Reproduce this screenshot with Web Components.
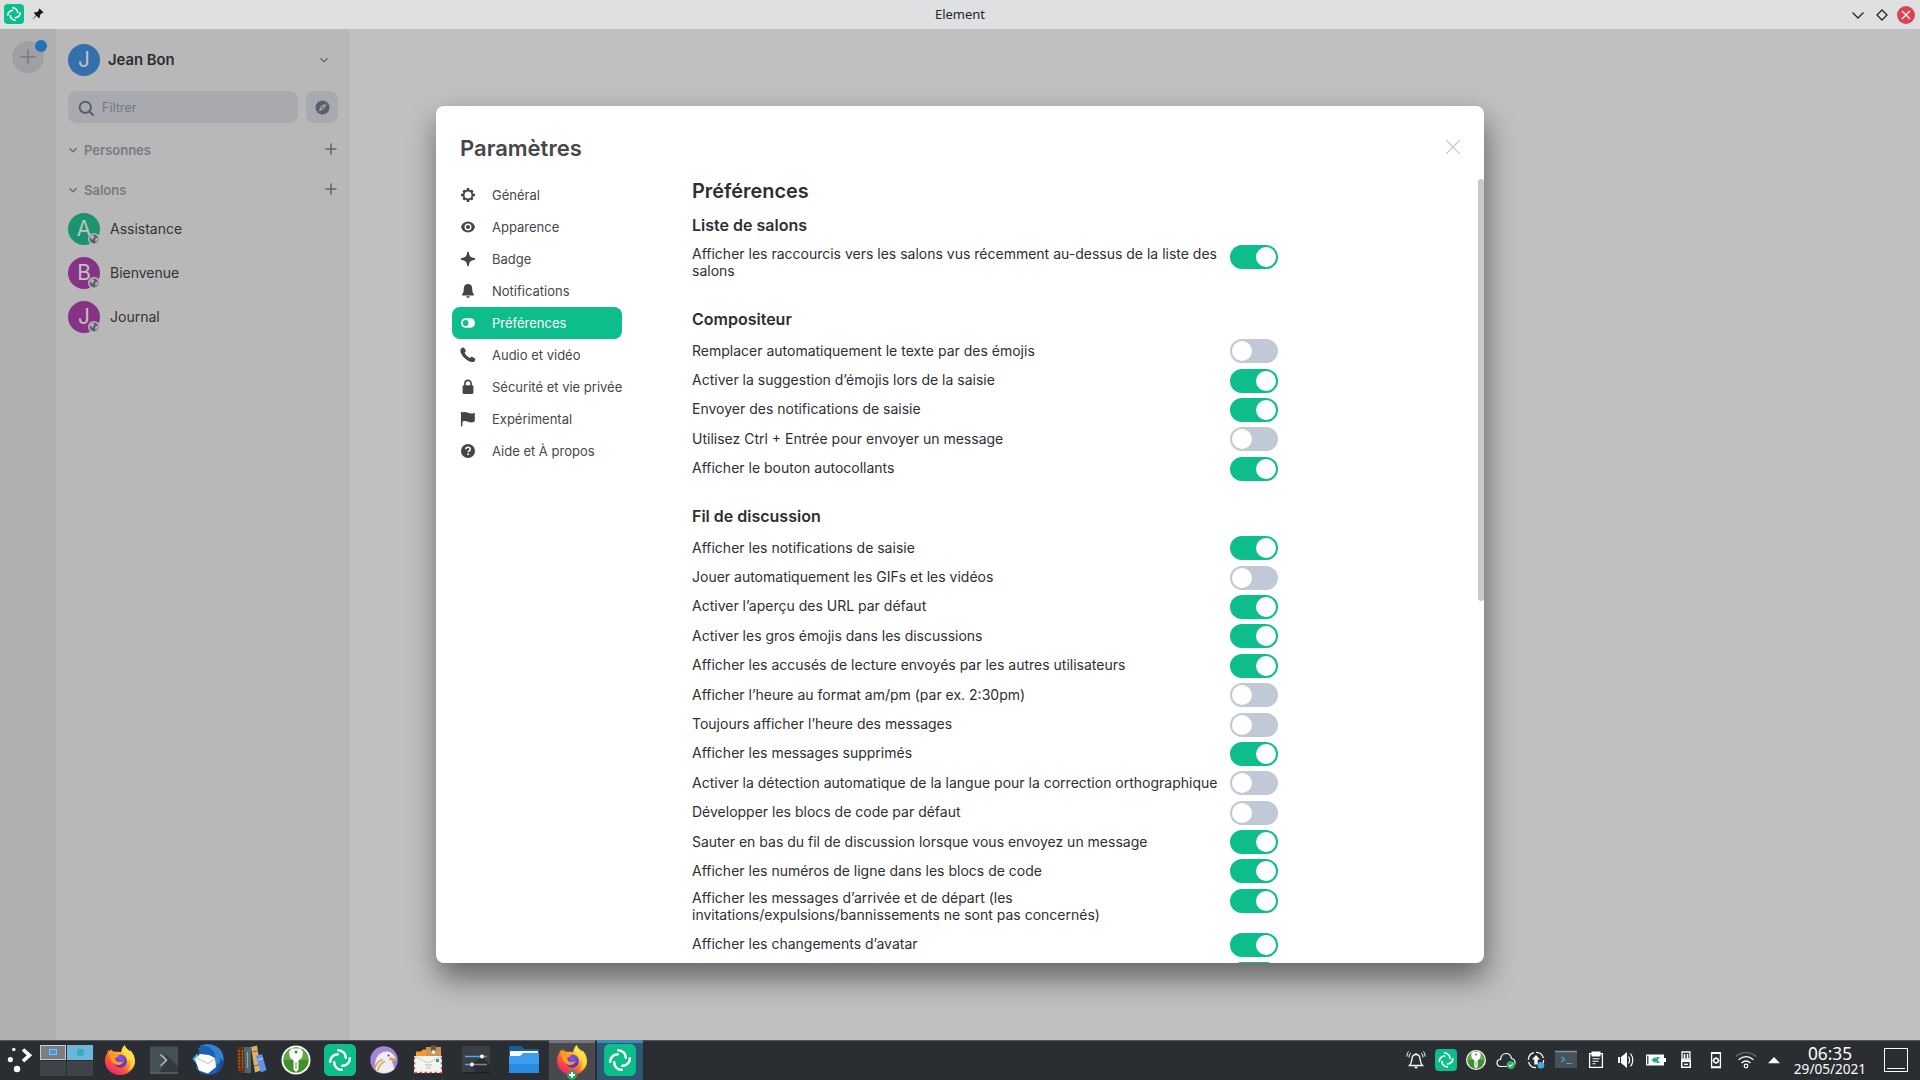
<!DOCTYPE html>
<html lang="fr">
<head>
<meta charset="utf-8">
<title>Element</title>
<style>
html,body{margin:0;width:1920px;height:1080px;overflow:hidden;background:#c0c0c0}
body{font-family:Inter,"Liberation Sans",sans-serif;color:#2e2f32}
</style>
</head>
<body>
<desktop-screen></desktop-screen>
<script>
const ARC='M22.68 3.24A18.36 18.36 0 0 1 41.04 21.6';
const logo=(r)=>`<svg viewBox="0 0 32 32"><rect width="32" height="32" rx="${r}" fill="#0dbd8b"/><g transform="translate(4.8 4.8) scale(.415)" fill="none" stroke="#fff" stroke-width="6" stroke-linecap="round"><path d="${ARC}"/><path d="${ARC}" transform="rotate(90 27 27)"/><path d="${ARC}" transform="rotate(180 27 27)"/><path d="${ARC}" transform="rotate(270 27 27)"/></g></svg>`;
const keepass=`<svg viewBox="0 0 32 32"><circle cx="16" cy="16" r="14.5" fill="#fff"/><circle cx="16" cy="16" r="12.6" fill="#3f8f2c"/><path d="M3.6 16a12.4 12.4 0 0 1 24.8 0z" fill="#64a84a"/><path d="M11.500 4.500h9l2.500 3.500-1 5.500-3.500 3v9L16 28l-2.500-2.500v-9l-3.500-3-1-5.500z" fill="#fff"/><circle cx="16" cy="8" r="1.500" fill="#3f8f2c"/><path d="M16 18v7" stroke="#4c9838" stroke-width="1"/></svg>`;
const ICONS={
logo:logo(6),
logoBig:logo(5.5),
keepass,
pin:`<svg viewBox="0 0 12 12"><path d="M7.500 .4 11.600 4.500 10.600 5.200 9.900 5 7.900 7.200 7.900 9.300 7 10.200 4.500 7.700.8 11.200.6 11 3.900 7.200 1.800 5.100 2.700 4.200 4.900 4.200 7 2.200 6.800 1.300z" fill="#17191b"/></svg>`,
gear:`<svg viewBox="0 0 16 16"><g stroke="#454545" stroke-width="2.600"><path d="M8 1v14M1 8h14M3.300 3.300l9.400 9.400M12.700 3.300l-9.400 9.400"/></g><circle cx="8" cy="8" r="5.400" fill="#454545"/><circle cx="8" cy="8" r="3.500" fill="#fff"/></svg>`,
eye:`<svg viewBox="0 0 16 16"><path d="M8 2.600C4.600 2.600 2 4.800.9 8 2 11.200 4.600 13.400 8 13.400s6-2.200 7.100-5.400C14 4.800 11.400 2.600 8 2.600z" fill="#454545"/><circle cx="8" cy="8" r="3.500" fill="#fff"/><circle cx="8" cy="8" r="2.100" fill="#454545"/></svg>`,
star:`<svg viewBox="0 0 16 16"><path d="M8 .8c.5 0 .8.300.9.900.5 3.300 1.300 4.600 5.300 5.300.6.100 1 .5 1 1s-.4.900-1 1c-4 .7-4.800 2-5.300 5.300-.1.600-.4.900-.9.900s-.8-.3-.9-.9C6.600 11 5.800 9.700 1.800 9c-.6-.1-1-.5-1-1s.4-.9 1-1c4-.7 4.800-2 5.300-5.300.1-.6.4-.9.900-.9z" fill="#454545"/></svg>`,
bell:`<svg viewBox="0 0 16 16"><path d="M8 1C5.200 1 3.800 3 3.800 5.500c0 3-.5 4.500-1.600 5.800-.5.600-.2 1.200.5 1.200h10.600c.7 0 1-.6.5-1.200-1.100-1.300-1.600-2.800-1.600-5.800C12.200 3 10.800 1 8 1zM6.200 13.300h3.600c-.2 1-.9 1.500-1.800 1.500s-1.600-.5-1.800-1.500z" fill="#454545"/></svg>`,
toggle:`<svg viewBox="0 0 16 16"><rect x="1" y="3.200" width="14" height="9.600" rx="4.800" fill="#fff"/><circle cx="5.600" cy="8" r="2.900" fill="#0dbd8b"/></svg>`,
phone:`<svg viewBox="0 0 16 16"><path d="M1.100 1.500C1.700.6 3 .1 3.900.7l1.700 2.400c.4.600.3 1.200-.2 1.700l-.8.9c.8 1.900 3.200 4.300 5.300 5.300l.9-.8c.5-.5 1.200-.5 1.700-.2l2.500 1.600c.7.900.2 2.300-.7 2.900C12.600 15.700 10.100 15.100 7 13 3.200 10.300.9 7 .4 4.200.3 3.200.6 2.200 1.100 1.500z" fill="#454545"/></svg>`,
lock:`<svg viewBox="0 0 16 16"><path d="M4.900 7V4.500a3.100 3.100 0 0 1 6.200 0V7" fill="none" stroke="#454545" stroke-width="1.600"/><rect x="2.600" y="6.300" width="10.800" height="8.600" rx="1.300" fill="#454545"/></svg>`,
flag:`<svg viewBox="0 0 16 16"><path d="M1.700 1.500v13.200" stroke="#454545" stroke-width="1.500" stroke-linecap="round"/><path d="M1.300 2C3.500.3 6 .9 8 1.800c2 .8 4 .8 6 .1.500-.2.800 0 .8.500v7.400c0 .4-.2.700-.5.900-2.300 1-4.300.8-6.300 0s-4-1-6 0z" fill="#454545"/></svg>`,
help:`<svg viewBox="0 0 16 16"><circle cx="8" cy="8" r="7" fill="#454545"/><path d="M5.900 6.300c0-1.200.9-2 2.100-2s2.200.7 2.200 1.900c0 1.600-2 1.600-2 3.100" fill="none" stroke="#fff" stroke-width="1.500"/><circle cx="8.100" cy="11.300" r="1" fill="#fff"/></svg>`,
close:`<svg viewBox="0 0 16 16"><path d="M1.200 1.200l13.600 13.600M14.800 1.200 1.200 14.800" stroke="#c1c1c1" stroke-width="1.100"/></svg>`,
chev:`<svg viewBox="0 0 10 10"><path d="M1.500 3.200 5 6.700 8.500 3.200" fill="none" stroke="#6b7078" stroke-width="1.600"/></svg>`,
plus:`<svg viewBox="0 0 12 12"><path d="M6 1v10M1 6h10" stroke="#5c6374" stroke-width="1.500" stroke-linecap="round"/></svg>`,
plusBig:`<svg viewBox="0 0 16 16"><path d="M8 .5v15M.5 8h15" stroke="#75787e" stroke-width="1.500"/></svg>`,
search:`<svg viewBox="0 0 16 16"><circle cx="7.300" cy="7.300" r="5.600" fill="none" stroke="#565d6b" stroke-width="1.900"/><path d="M11.400 11.400l3.600 3.600" stroke="#565d6b" stroke-width="2" stroke-linecap="round"/></svg>`,
compass:`<svg viewBox="0 0 16 16"><circle cx="8" cy="8" r="7.500" fill="#596070"/><path d="M12.100 3.900 9.600 9.600 3.900 12.100 6.400 6.400z" fill="#a9abb0"/><circle cx="8" cy="8" r="1.200" fill="#596070"/></svg>`,
globe:`<svg viewBox="0 0 12 12"><circle cx="6" cy="6" r="6" fill="#b8b8b8"/><circle cx="6" cy="6" r="4.400" fill="#5b616c"/><path d="M2.300 4.200c1-1.600 2-2 3.400-1.800L6.300 4 4.800 5.300 5 7 3.800 6.200zM7.300 5.400l1.700-.6 1 1.200-1 2.200L7 8.800l.4-1.500z" fill="#b8b8b8"/></svg>`,
min:`<svg viewBox="0 0 20 20"><path d="M4.500 7.500 10 13l5.500-5.500" fill="none" stroke="#232629" stroke-width="1.300"/></svg>`,
max:`<svg viewBox="0 0 20 20"><path d="M10 5l5 5-5 5-5-5z" fill="none" stroke="#232629" stroke-width="1.300"/></svg>`,
shut:`<svg viewBox="0 0 20 20"><circle cx="10" cy="10" r="9" fill="#da4453"/><path d="M6 6l8 8M14 6l-8 8" stroke="#fff" stroke-width="1.200"/></svg>`,
kde:`<svg viewBox="0 0 32 32"><circle cx="9.800" cy="5.500" r="1.700" fill="#fff"/><circle cx="6.400" cy="15.600" r="2.600" fill="#fff"/><circle cx="13" cy="25" r="3.200" fill="#fff"/><path d="M19 5.500l6.500 5.800-6.500 5.800" fill="none" stroke="#fff" stroke-width="3.600"/></svg>`,
firefox:`<svg viewBox="0 0 32 32"><defs><linearGradient id="f" x1=".8" y1=".1" x2=".2" y2=".95"><stop offset="0" stop-color="#fff44f"/><stop offset=".35" stop-color="#ffb01f"/><stop offset=".65" stop-color="#ff5a36"/><stop offset="1" stop-color="#ee1d79"/></linearGradient><radialGradient id="p" cx=".5" cy=".3" r=".8"><stop offset="0" stop-color="#8a55f0"/><stop offset="1" stop-color="#46309b"/></radialGradient></defs><path d="M20.600 1c.7 2.200 2.200 3.500 4 5 .6.500 1.100 1 1.600 1.600 0-.6-.1-1-.2-1.500 3 2.600 5 6.800 5 11.200C31 25.300 24.300 31 16 31 7.700 31 1 25 1 17c0-3.200.8-6 2.700-8.600l.3-2.600 1.700 1.500 1.200-2 1.600 2c1 0 2.300.2 3.500.8 2.200-.5 4-.3 5 .2C17.500 5.200 18.800 3 20.600 1z" fill="url(#f)"/><circle cx="16.300" cy="17.200" r="6.600" fill="url(#p)"/><path d="M5 8.500c2.200-.8 4.600-.3 6.400 1.200 1.300-.6 3.800-.7 4.800.2l-1.600 1.400c0 1.600-1.200 2-3.200 2.200-.6 3 1.700 4.500 4.300 4.600 2 .1 3-.8 4.200-.8-1.300 2.300-3.600 3.800-6 3.700-4.500-.1-8.500-4.800-8.900-12.500z" fill="#ff9a26"/><path d="M20.500 1.500c-2 2.500-2 5.500-.3 8 2 2.700 3.600 5 3.200 8.500 1.200-1.100 1.600-2.800 1.500-4.300C27.500 18 27 24 22 27.500c5-1.500 8.500-5 8.500-10.500 0-4-1.500-7.500-4.500-10l.2 1.500C24 6 21.500 4.500 20.500 1.500z" fill="#ffe14a" opacity=".75"/></svg>`,
term:`<svg viewBox="0 0 32 32"><rect x="2" y="2.500" width="28" height="27" rx="1" fill="#475155"/><path d="M16 9l14 13v7.500H10L20 16z" fill="#343b3e"/><path d="M12.500 10.500l6 5.700-6 5.700" fill="none" stroke="#c9ced0" stroke-width="1.200"/><path d="M2 29h28" stroke="#6a7478" stroke-width="1"/></svg>`,
bird:`<svg viewBox="0 0 32 32"><path d="M8 2c8-3 17-.5 21 5 4 7 3.500 14-1 19-4.500 5-12 6-18 3.500l-6-5z" fill="#1f5fb5"/><path d="M8 2c6-1 11 1 14 6 2.500 4 2 10 0 14l9-5C33 9 27 2 20 .8 15-.2 11 .5 8 2z" fill="#3084d2"/><path d="M6 4.500l3-2.500 6 5-6 4z" fill="#1f5fb5"/><path d="M.5 15l5-6 1 13z" fill="#41b3ee"/><path d="M3 15l5-5 9 1 6 3 1 9-8 6.500-9-3z" fill="#fff"/><path d="M5 14l11 5.500 7-5" fill="none" stroke="#b4bac2" stroke-width="1"/><path d="M23 27c4-4 6-8 5-14l3 5c-.5 5-3 8-8 9z" fill="#174a94"/></svg>`,
books:`<svg viewBox="0 0 32 32"><path d="M1 3l7-1 1 27H2z" fill="#5d3117"/><path d="M8 3h7v26H9z" fill="#50686c"/><path d="M15 3l6-1.500 4 25-6 2z" fill="#d9b06c"/><path d="M20 12l6-2 4.500 16-5.500 2.500z" fill="#5e93ef"/><path d="M3 6v20M6.500 6v20" stroke="#b0752b" stroke-width="1.200" stroke-dasharray="2 1.200"/><path d="M11.500 8v16" stroke="#8ba2a5" stroke-width="1.200"/><path d="M16.500 8l5-1.300M18 22l5-1.300" stroke="#8e602b" stroke-width="1.100"/><path d="M22 16l5-1.700" stroke="#dce7ff" stroke-width="1"/></svg>`,
pale:`<svg viewBox="0 0 32 32"><circle cx="16" cy="16" r="13.700" fill="#a386dc"/><path d="M8 27c-2-7-1-16 7-19 5-1.800 10 .5 11.500 4.500l2 2.500c-3 .5-5 1.500-4 4l2 6c-5 4.500-12 5.500-18.500 2z" fill="#f0edf2"/><path d="M22 13l7 2c-1 1.500-2 2-3.500 2-1.500-.8-3-1-4.500-.5z" fill="#d9a54c"/><path d="M15 15.500c-4 1-7 4-8.500 9.500M17 17.500c-4 1.500-6.500 5-7.500 9.500" fill="none" stroke="#d9a54c" stroke-width="1.600"/><circle cx="20.500" cy="11.500" r="1" fill="#47364d"/></svg>`,
mail:`<svg viewBox="0 0 32 32"><path d="M4 7.500h5l2-2h4V28H4z" fill="#f39c2c"/><rect x="14" y="3" width="15" height="20" fill="#c99455"/><rect x="19" y="1.500" width="5" height="6" fill="#6d553e"/><circle cx="21.500" cy="8" r="2" fill="#f4e3c7"/><path d="M2 12h28v17H2z" fill="#f4f4f2"/><path d="M2 12l14 7 14-7" fill="none" stroke="#ccc" stroke-width="1"/><path d="M2.500 28.500h27M29.500 13v15M2.500 13v15" stroke="#db5050" stroke-width="1.300" stroke-dasharray="2.500 2.500"/><rect x="24" y="15" width="3" height="3" fill="#20a4a0"/><path d="M13 21h7M14 24h5" stroke="#b5b5b5" stroke-width="1"/></svg>`,
sliders:`<svg viewBox="0 0 32 32"><rect x="2" y="2" width="28" height="27" rx="1" fill="#3b3f43"/><path d="M22 13l8 8v8H16l-5-8z" fill="#282c30"/><path d="M5 12.500h17M5 20.500h7" stroke="#3daee9" stroke-width="1.500"/><path d="M23 12.500h4M13 20.500h14" stroke="#7b858c" stroke-width="1.500"/><circle cx="22" cy="12.500" r="2" fill="#fff"/><circle cx="12" cy="20.500" r="2" fill="#fff"/><path d="M2 28.800h28" stroke="#17191b"/></svg>`,
folder:`<svg viewBox="0 0 32 32"><path d="M1 2h12l3 3h15v20H1z" fill="#17609f"/><path d="M2 7h28v6H2z" fill="#fbfcfd"/><path d="M1 12h11l3-3h16v20H1z" fill="#3a9df0"/><path d="M1 20h30v9H1z" fill="#2585df" opacity=".75"/></svg>`,
tbell:`<svg viewBox="0 0 22 22"><path d="M4.500 16.500h13c-2-2-2.200-4-2.500-7-.3-2.600-1.700-4-4-4s-3.700 1.400-4 4c-.3 3-.5 5-2.500 7zM9.500 18.500h3M11 4v1.500" fill="none" stroke="#fcfcfc" stroke-width="1.300"/><path d="M6 4C4.500 5 4 6.500 4 8.500M3.700 2.500C2.300 4 2 5.500 2 7.500M16 4c1.500 1 2 2.500 2 4.500M18.300 2.500C19.700 4 20 5.500 20 7.500" fill="none" stroke="#fcfcfc" stroke-width="1"/></svg>`,
cloud:`<svg viewBox="0 0 22 22"><path d="M6 17.500c-2.500 0-4-1.500-4-3.500s1.500-3.500 3.500-3.500C6 6.500 8 4.500 11 4.500s5 2 5.500 5c2 .3 3.500 1.800 3.500 4s-1.500 4-4 4z" fill="none" stroke="#fcfcfc" stroke-width="1.200"/><circle cx="15.800" cy="16" r="4.200" fill="#2fa866"/><path d="M13.700 16l1.600 1.500 2.700-3" fill="none" stroke="#fff" stroke-width="1.100"/></svg>`,
update:`<svg viewBox="0 0 22 22"><circle cx="11" cy="11" r="7.700" fill="none" stroke="#fcfcfc" stroke-width="1.200" stroke-dasharray="10 2"/><path d="M11 6l4 4.500h-2.300v5H9.300v-5H7z" fill="#fcfcfc"/><circle cx="16" cy="16.300" r="3.300" fill="#3daee9"/></svg>`,
konsole:`<svg viewBox="0 0 22 22"><rect width="22" height="17" y="2" fill="#475259"/><path d="M0 2.500h22" stroke="#8b969c" stroke-width="1.400"/><path d="M6.500 8l3 2.500-3 2.500M11.500 14.500h5" fill="none" stroke="#3daee9" stroke-width="1.200"/></svg>`,
clip:`<svg viewBox="0 0 22 22"><path d="M4.600 4.600h12.800v13.800H4.600z" fill="none" stroke="#fcfcfc" stroke-width="1.300"/><path d="M7 3h8v4H7zM7.500 9.800h7M7.500 12.300h6M7.500 14.800h3" stroke="#fcfcfc" stroke-width="1.100" fill="#fcfcfc"/></svg>`,
vol:`<svg viewBox="0 0 22 22"><path d="M3 8h2v6H3zM6 8l6-5v16l-6-5z" fill="#fcfcfc"/><path d="M13.500 7.500q2.300 3.500 0 7M15.500 4.500q4.600 6.500 0 13" fill="none" stroke="#fcfcfc" stroke-width="1.200"/></svg>`,
batt:`<svg viewBox="0 0 22 22"><path d="M1 5.500h18v11H1zM19 9h2v4h-2z" fill="#fcfcfc"/><path d="M2.200 6.700h1.200v8.600H2.200z" fill="#2a2e32"/><path d="M6.500 11l4-3.200v1.700h1V8h3v1.400H13v3.200h1.500V14h-3v-1.500h-1v1.700z" fill="#1fa58e"/></svg>`,
usb:`<svg viewBox="0 0 22 22"><path d="M7 3h8v7H7z" fill="none" stroke="#fcfcfc" stroke-width="1.300"/><path d="M9.500 5v4M12.500 5v4" stroke="#fcfcfc" stroke-width="1.600"/><path d="M6 10.500h10v8.500H6z" fill="#fcfcfc"/><path d="M7.500 13h7v4.500h-7z" fill="#2a2e32"/><path d="M9 15.300h4" stroke="#fcfcfc" stroke-width="1.300"/></svg>`,
mobile:`<svg viewBox="0 0 22 22"><path d="M6.600 3.600h8.800v14.800H6.600z" fill="none" stroke="#fcfcfc" stroke-width="1.300"/><path d="M6 4h10M6 18.300h10" stroke="#fcfcfc" stroke-width="2"/><circle cx="11" cy="11.500" r="2.300" fill="none" stroke="#fcfcfc" stroke-width="1.500"/><path d="M11 8v7M7.500 11.500h7" stroke="#fcfcfc" stroke-width="1" stroke-dasharray="1.200 4.600"/></svg>`,
wifi:`<svg viewBox="0 0 22 22"><path d="M.8 7.500q10.200-8 20.400 0" fill="none" stroke="#72777b" stroke-width="1.100"/><path d="M3.500 10.800q7.500-6.200 15 0M6.500 14q4.500-4 9 0" fill="none" stroke="#fcfcfc" stroke-width="1.200"/><circle cx="11" cy="17" r="1.800" fill="none" stroke="#fcfcfc" stroke-width="1.200"/></svg>`,
tri:`<svg viewBox="0 0 22 22"><path d="M5 14.200 11 8l6 6.200z" fill="#fcfcfc"/></svg>`
};
const define=(name,css,html)=>{
  customElements.define(name,class extends HTMLElement{
    constructor(){
      super();
      const t=document.createElement('template');
      t.innerHTML=`<style>*{box-sizing:border-box}${css}</style>${typeof html==='function'?html(this):html}`;
      this.attachShadow({mode:'open'}).append(t.content.cloneNode(true));
    }
  });
};
define('ui-icon',':host{display:block;flex:none;width:var(--s,16px);height:var(--s,16px)}svg{display:block;width:100%;height:100%;overflow:visible}',h=>ICONS[h.getAttribute('name')]||'');

define('window-bar',`:host{display:grid;grid-template-columns:1fr auto 1fr;align-items:center;height:29px;background:#dfe0e2;font:13px "Noto Sans",sans-serif;color:#232629}
.l,.r{display:flex;align-items:center}.l{gap:8px;padding-left:4px}.r{justify-content:flex-end;gap:4px;padding-right:4px}.t{padding-bottom:2px}.l{padding-bottom:1px}`,
`<div class="l"><ui-icon name="logo" style="--s:20px"></ui-icon><ui-icon name="pin" style="--s:12px"></ui-icon></div><div class="t"><slot></slot></div><div class="r"><ui-icon name="min" style="--s:20px"></ui-icon><ui-icon name="max" style="--s:20px"></ui-icon><ui-icon name="shut" style="--s:20px"></ui-icon></div>`);

define('community-rail',`:host{display:flex;justify-content:center;align-items:flex-start;width:56px;background:#b0b0b0;padding-top:12px}
.b{position:relative;width:32px;height:32px;border-radius:50%;background:#9ea0a5;display:flex;align-items:center;justify-content:center}
.b i{position:absolute;left:23px;top:-1px;width:12px;height:12px;border-radius:50%;background:#2470b9}`,
`<div class="b"><ui-icon name="plusBig" style="--s:16px"></ui-icon><i></i></div>`);

define('user-avatar',`:host{position:relative;display:flex;flex:none;width:32px;height:32px;border-radius:50%;background:var(--c);color:#c3c3c3;font-size:20.800px;font-weight:400;line-height:31px;justify-content:center}
ui-icon{position:absolute;left:20px;top:20px}`,h=>`<slot></slot>${h.hasAttribute('public')?'<ui-icon name="globe" style="--s:12px"></ui-icon>':''}`);

define('room-tile',`:host{display:flex;align-items:center;height:44px;gap:10px;font-size:14px;line-height:18px;color:#323335}span{padding-bottom:1px}`,
h=>`<user-avatar public style="--c:${h.getAttribute('color')}">${h.getAttribute('letter')}</user-avatar><span><slot></slot></span>`);

define('room-section',`:host{display:block}.h{display:flex;align-items:center;height:40px;font-weight:600;font-size:13px;color:#767b82}.h ui-icon:first-child{margin-right:6px}.h ui-icon:last-child{margin-left:auto;margin-right:1px;margin-top:-2px}`,
h=>`<div class="h"><ui-icon name="chev" style="--s:10px"></ui-icon><span>${h.getAttribute('label')}</span><ui-icon name="plus" style="--s:12px"></ui-icon></div><slot></slot>`);

define('left-panel',`:host{display:block;width:294px;background:#b8b8b8;padding:15px 12px 0}
.u{display:flex;align-items:center;height:32px;gap:8px;font-weight:600;font-size:14.800px;color:#2c2d30}.u span{padding-bottom:1px}
.u ui-icon{margin-left:auto;margin-right:9px}
.s{display:flex;gap:8px;margin-top:15px;margin-bottom:7px}
.f{flex:1;height:32px;border-radius:8px;background:#a8aaaf;display:flex;align-items:center;gap:8px;padding-left:10px;font-size:12.600px;color:#73787f}.f ui-icon{margin-top:1px}
.e{width:32px;height:32px;border-radius:8px;background:#a8aaaf;display:flex;align-items:center;justify-content:center}
.rooms{margin-top:-3px}`,
`<div class="u"><user-avatar style="--c:#3470ab">J</user-avatar><span>Jean Bon</span><ui-icon name="chev" style="--s:10px"></ui-icon></div>
<div class="s"><div class="f"><ui-icon name="search" style="--s:16px"></ui-icon><span>Filtrer</span></div><div class="e"><ui-icon name="compass" style="--s:15px"></ui-icon></div></div>
<room-section label="Personnes"></room-section>
<room-section label="Salons"><div class="rooms"><room-tile color="#1b9270" letter="A">Assistance</room-tile><room-tile color="#873385" letter="B">Bienvenue</room-tile><room-tile color="#873385" letter="J">Journal</room-tile></div></room-section>`);

define('toggle-switch',`:host{display:flex;flex:none;width:48px;height:24px;border-radius:12px;padding:2px;background:#c1c8d6}:host([on]){background:#0dbd8b;justify-content:flex-end}
i{width:20px;height:20px;border-radius:50%;background:#fff}`,'<i></i>');

define('settings-flag',`:host{display:flex;justify-content:space-between;align-items:flex-start;height:29.400px;font-size:14px;line-height:17px;color:#2e2f32}
:host([tall]){height:44px}
.l{display:flex;align-items:center;min-height:21.900px;white-space:nowrap}`,
h=>`<div class="l"><span><slot></slot></span></div><toggle-switch ${h.hasAttribute('on')?'on':''}></toggle-switch>`);

define('settings-group',`:host{display:block;margin-bottom:20.800px}h3{margin:0 0 9.800px;font-size:16px;line-height:19.400px;font-weight:600;color:#2e2f32}`,
h=>`<h3>${h.getAttribute('label')}</h3><slot></slot>`);

define('nav-tab',`:host{display:flex;align-items:center;height:32px;border-radius:8px;padding-left:8px;gap:16px;font-size:13px;color:#45474a;white-space:nowrap}:host([active]){background:#0dbd8b;color:#fff}`,
h=>`<ui-icon name="${h.getAttribute('icon')}"></ui-icon><span><slot></slot></span>`);

define('settings-dialog',`:host{display:flex;flex-direction:column;width:1048px;height:857px;background:#fff;border-radius:8px;overflow:hidden;box-shadow:2px 15px 30px 0 rgba(0,0,0,.48)}
header{display:flex;justify-content:space-between;align-items:center;height:73px;padding:11px 23px 0 24px;flex:none}
header ui-icon{margin-bottom:2px}
h1{margin:0;font-size:22px;line-height:26px;font-weight:600;color:#45474a}
.b{flex:1;min-height:0;display:flex}
nav{width:170px;margin-left:16px;flex:none}
main{flex:1;margin-left:70px;min-width:0;overflow:hidden;display:flex;justify-content:space-between}
.c{width:586px}
h2{margin:0 0 13px;font-size:19.900px;line-height:24px;font-weight:600}
.sb{width:6px;height:422px;border-radius:3px;background:#c9c9c9}`,
`<header><h1>Paramètres</h1><ui-icon name="close" style="--s:16px"></ui-icon></header>
<div class="b"><nav>
<nav-tab icon="gear">Général</nav-tab><nav-tab icon="eye">Apparence</nav-tab><nav-tab icon="star">Badge</nav-tab><nav-tab icon="bell">Notifications</nav-tab><nav-tab icon="toggle" active>Préférences</nav-tab><nav-tab icon="phone">Audio et vidéo</nav-tab><nav-tab icon="lock">Sécurité et vie privée</nav-tab><nav-tab icon="flag">Expérimental</nav-tab><nav-tab icon="help">Aide et À propos</nav-tab>
</nav><main><div class="c"><h2>Préférences</h2>
<settings-group label="Liste de salons"><settings-flag on tall>Afficher les raccourcis vers les salons vus récemment au-dessus de la liste des<br>salons</settings-flag></settings-group>
<settings-group label="Compositeur">
<settings-flag>Remplacer automatiquement le texte par des émojis</settings-flag>
<settings-flag on>Activer la suggestion d’émojis lors de la saisie</settings-flag>
<settings-flag on>Envoyer des notifications de saisie</settings-flag>
<settings-flag>Utilisez Ctrl + Entrée pour envoyer un message</settings-flag>
<settings-flag on>Afficher le bouton autocollants</settings-flag>
</settings-group>
<settings-group label="Fil de discussion">
<settings-flag on>Afficher les notifications de saisie</settings-flag>
<settings-flag>Jouer automatiquement les GIFs et les vidéos</settings-flag>
<settings-flag on>Activer l’aperçu des URL par défaut</settings-flag>
<settings-flag on>Activer les gros émojis dans les discussions</settings-flag>
<settings-flag on>Afficher les accusés de lecture envoyés par les autres utilisateurs</settings-flag>
<settings-flag>Afficher l’heure au format am/pm (par ex. 2:30pm)</settings-flag>
<settings-flag>Toujours afficher l’heure des messages</settings-flag>
<settings-flag on>Afficher les messages supprimés</settings-flag>
<settings-flag>Activer la détection automatique de la langue pour la correction orthographique</settings-flag>
<settings-flag>Développer les blocs de code par défaut</settings-flag>
<settings-flag on>Sauter en bas du fil de discussion lorsque vous envoyez un message</settings-flag>
<settings-flag on>Afficher les numéros de ligne dans les blocs de code</settings-flag>
<settings-flag on tall>Afficher les messages d’arrivée et de départ (les<br>invitations/expulsions/bannissements ne sont pas concernés)</settings-flag>
<settings-flag on>Afficher les changements d’avatar</settings-flag>
<settings-flag on></settings-flag>
</settings-group>
</div><div class="sb"></div></main></div>`);

define('desktop-pager',`:host{display:grid;grid-template-columns:26px 26px;grid-template-rows:15px 15px;gap:1px;width:53px}
div{background:#3f4347;display:flex;align-items:center;justify-content:center}
.a{background:#7b7d80;border:1px solid #c9cbcc}.b{background:#6fb6dc}
.a i{width:8px;height:6px;background:#3f97e0;border:1px solid #7cc0f5}.b i{width:7px;height:7px;border-radius:2px;background:#35aeb8}`,
`<div class="a"><i></i></div><div class="b"><i></i></div><div></div><div></div>`);

define('task-button',`:host{display:flex;align-items:center;justify-content:center;width:44px;height:40px;flex:none;position:relative}
:host([wide]){width:48px}
.bg{display:flex;align-items:center;justify-content:center;width:46px;height:40px}
:host([state=window]) .bg{background:#47494c;border-top:3px solid #75777a}
:host([state=active]) .bg{background:#2d5873;border-top:3px solid #3c8dbb}
:host([state]) ui-icon{margin-top:-3px}
b{position:absolute;left:19px;top:30px;width:10px;height:10px;border-radius:50%;background:#27a35c}
b::before{content:"";position:absolute;left:2px;right:2px;top:4px;height:1.500px;background:#fff}b::after{content:"";position:absolute;top:2px;bottom:2px;left:4px;width:1.500px;background:#fff}`,
h=>`<div class="bg"><ui-icon name="${h.getAttribute('icon')}" style="--s:${h.getAttribute('size')||32}px"></ui-icon></div>${h.hasAttribute('plus')?'<b></b>':''}`);

define('desktop-clock',`:host{display:flex;flex-direction:column;align-items:center;justify-content:center;width:86px;font-family:"Noto Sans",sans-serif;color:#fcfcfc}
.t{font-size:17.300px;line-height:17px}.d{font-size:13.600px;line-height:14px}`,`<span class="t">06:35</span><span class="d">29/05/2021</span>`);

define('task-bar',`:host{display:flex;align-items:center;height:40px;background:#2a2e32;box-shadow:inset 0 1px #505357}
.k{width:40px;padding-left:4px}desktop-pager{margin-right:5px}.w{display:flex;margin-left:2px}
.tray{display:flex;align-items:center;margin-left:auto}.tray>ui-icon{margin:0 4px}.tray>.tri{margin:0 2px}
.desk{width:24px;height:24px;border:1px solid #fcfcfc;margin:0 12px 0 11px;display:flex;align-items:flex-end;padding:0 2px 2px}.desk i{height:1px;width:100%;background:#fcfcfc}`,
`<div class="k"><ui-icon name="kde" style="--s:32px"></ui-icon></div><desktop-pager></desktop-pager>
<task-button icon="firefox"></task-button><task-button icon="term"></task-button><task-button icon="bird"></task-button><task-button icon="books"></task-button><task-button icon="keepass"></task-button><task-button icon="logoBig"></task-button><task-button icon="pale"></task-button><task-button icon="mail"></task-button>
<div class="w"><task-button wide icon="sliders"></task-button><task-button wide icon="folder"></task-button><task-button wide icon="firefox" state="window" plus></task-button><task-button wide icon="logoBig" state="active"></task-button></div>
<div class="tray">${['tbell','logoBig','keepass','cloud','update','konsole','clip','vol','batt','usb','mobile','wifi'].map(n=>`<ui-icon name="${n}" style="--s:22px"></ui-icon>`).join('')}<ui-icon class="tri" name="tri" style="--s:22px"></ui-icon><desktop-clock></desktop-clock><div class="desk"><i></i></div></div>`);

define('desktop-screen',`:host{display:flex;flex-direction:column;width:1920px;height:1080px}
.app{position:relative;flex:1;display:flex;background:#c0c0c0}
.modal{position:absolute;inset:0;display:flex;align-items:center;justify-content:center;overflow:hidden}`,
`<window-bar>Element</window-bar><div class="app"><community-rail></community-rail><left-panel></left-panel><div class="modal"><settings-dialog></settings-dialog></div></div><task-bar></task-bar>`);
</script>
</body>
</html>
